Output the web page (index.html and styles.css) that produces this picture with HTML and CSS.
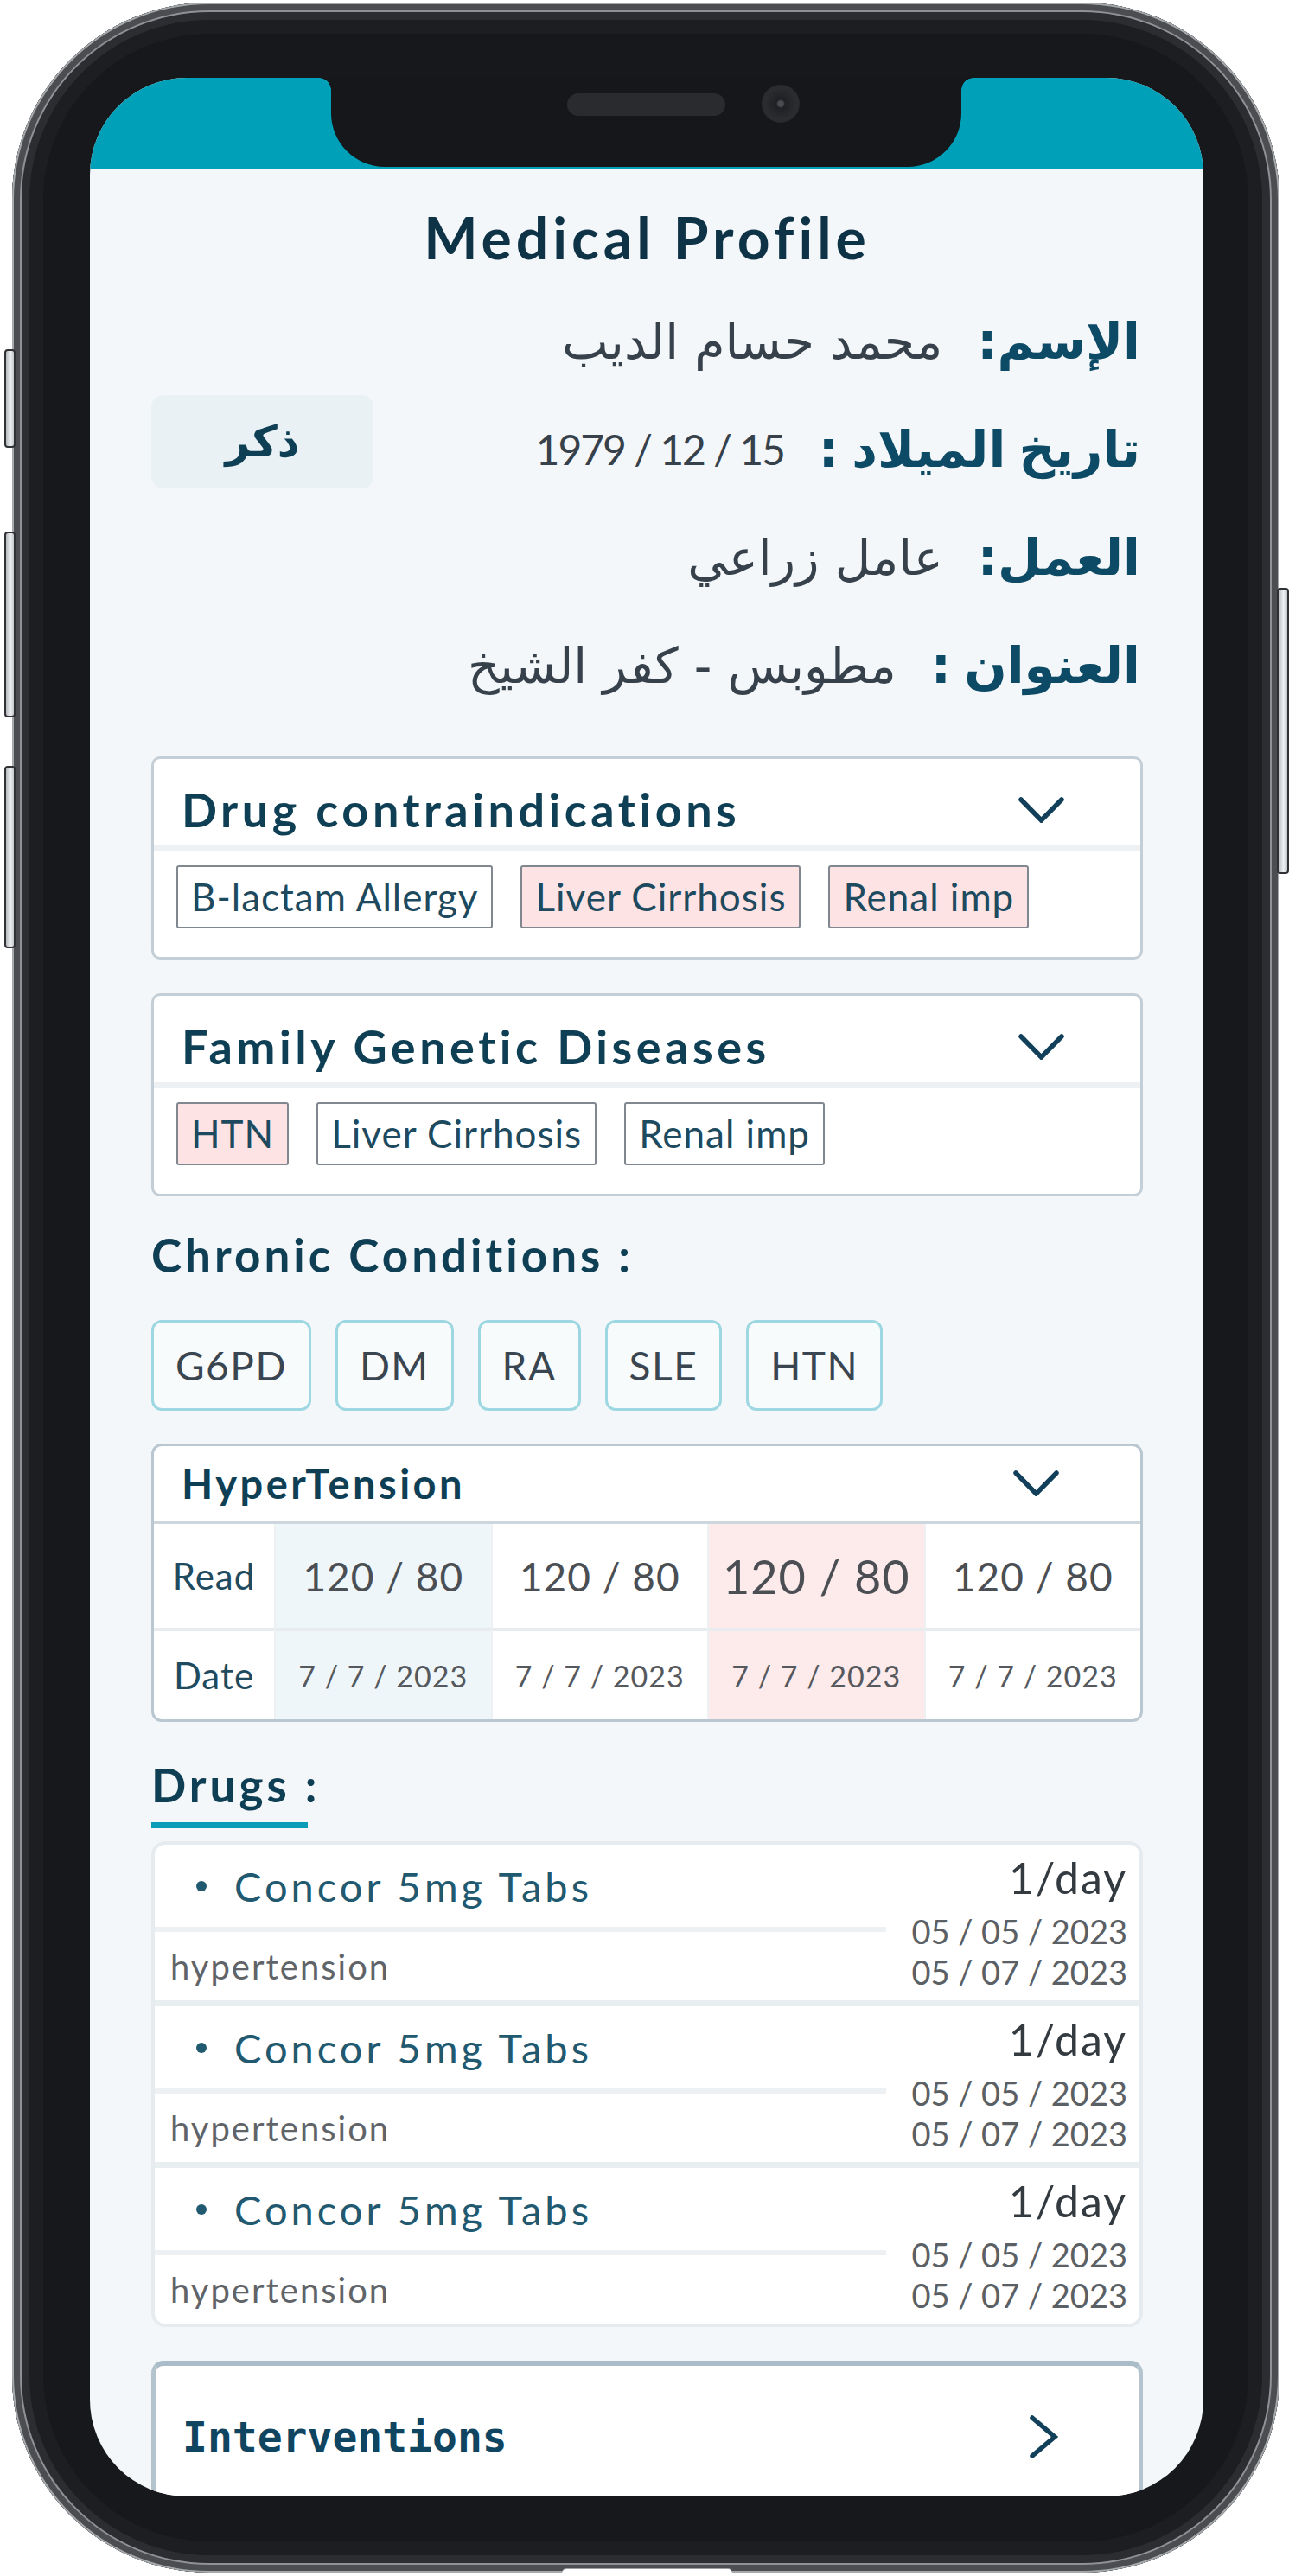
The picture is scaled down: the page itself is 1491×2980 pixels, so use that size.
FILE: index.html
```html
<!DOCTYPE html>
<html lang="en">
<head>
<meta charset="utf-8">
<title>Medical Profile</title>
<link rel="stylesheet" href="styles.css">
</head>
<body>
<div class="phone">
  <span class="btn btn-mute"></span>
  <span class="btn btn-volup"></span>
  <span class="btn btn-voldown"></span>
  <span class="btn btn-power"></span>
  <span class="port"></span>
  <div class="screen">
    <div class="topbar"></div>
    <div class="notch"><span class="speaker"></span><span class="camera"></span></div>
    <main class="content">
      <h1 class="title">Medical Profile</h1>

      <section class="info" dir="rtl">
        <div class="info-row"><span class="label">الإسم:</span><span class="value">محمد حسام الديب</span></div>
        <div class="info-row"><span class="label">تاريخ الميلاد :</span><span class="value num" dir="ltr">1979 / 12 / 15</span><span class="gender">ذكر</span></div>
        <div class="info-row"><span class="label">العمل:</span><span class="value">عامل زراعي</span></div>
        <div class="info-row"><span class="label">العنوان :</span><span class="value">مطوبس - كفر الشيخ</span></div>
      </section>

      <section class="card">
        <div class="card-head">
          <h2 class="card-title">Drug contraindications</h2>
          <svg class="chev-down" width="53" height="30" viewBox="0 0 53 30"><polyline points="3,3 26.5,27 50,3"/></svg>
        </div>
        <div class="tags">
          <span class="tag">B-lactam Allergy</span>
          <span class="tag tag-alert">Liver Cirrhosis</span>
          <span class="tag tag-alert">Renal imp</span>
        </div>
      </section>

      <section class="card card-second">
        <div class="card-head">
          <h2 class="card-title">Family Genetic Diseases</h2>
          <svg class="chev-down" width="53" height="30" viewBox="0 0 53 30"><polyline points="3,3 26.5,27 50,3"/></svg>
        </div>
        <div class="tags">
          <span class="tag tag-alert">HTN</span>
          <span class="tag">Liver Cirrhosis</span>
          <span class="tag">Renal imp</span>
        </div>
      </section>

      <h2 class="section-title">Chronic Conditions :</h2>
      <div class="chronic">
        <span class="chip">G6PD</span>
        <span class="chip">DM</span>
        <span class="chip">RA</span>
        <span class="chip">SLE</span>
        <span class="chip">HTN</span>
      </div>

      <section class="vitals">
        <div class="vitals-head">
          <h3 class="vitals-title">HyperTension</h3>
          <svg class="chev-down" width="53" height="30" viewBox="0 0 53 30"><polyline points="3,3 26.5,27 50,3"/></svg>
        </div>
        <div class="vitals-grid">
          <div class="cell rowhead">Read</div>
          <div class="cell read col-blue">120 / 80</div>
          <div class="cell read">120 / 80</div>
          <div class="cell read read-big col-pink">120 / 80</div>
          <div class="cell read">120 / 80</div>
          <div class="cell rowhead row2">Date</div>
          <div class="cell date row2 col-blue">7 / 7 / 2023</div>
          <div class="cell date row2">7 / 7 / 2023</div>
          <div class="cell date row2 col-pink">7 / 7 / 2023</div>
          <div class="cell date row2">7 / 7 / 2023</div>
        </div>
      </section>

      <h2 class="section-title drugs-title">Drugs :</h2>
      <div class="underline"></div>

      <section class="drug-list">
        <div class="drug">
          <div class="drug-name"><span class="dot"></span>Concor 5mg Tabs</div>
          <div class="drug-line"></div>
          <div class="drug-reason">hypertension</div>
          <div class="drug-meta"><div class="freq">1/day</div><div class="dates">05 / 05 / 2023<br>05 / 07 / 2023</div></div>
        </div>
        <div class="drug">
          <div class="drug-name"><span class="dot"></span>Concor 5mg Tabs</div>
          <div class="drug-line"></div>
          <div class="drug-reason">hypertension</div>
          <div class="drug-meta"><div class="freq">1/day</div><div class="dates">05 / 05 / 2023<br>05 / 07 / 2023</div></div>
        </div>
        <div class="drug">
          <div class="drug-name"><span class="dot"></span>Concor 5mg Tabs</div>
          <div class="drug-line"></div>
          <div class="drug-reason">hypertension</div>
          <div class="drug-meta"><div class="freq">1/day</div><div class="dates">05 / 05 / 2023<br>05 / 07 / 2023</div></div>
        </div>
      </section>

      <section class="interventions">
        <div class="interventions-row">
          <span class="interventions-title">Interventions</span>
          <svg class="chev-right" width="39" height="52" viewBox="0 0 39 52"><polyline points="6,4 32,26 6,48"/></svg>
        </div>
      </section>
    </main>
  </div>
</div>
</body>
</html>
```

FILE: styles.css
```css
html, body {
  margin: 0;
  padding: 0;
  background: #ffffff;
}
body {
  width: 1491px;
  height: 2980px;
  overflow: hidden;
  font-family: Lato, "Open Sans", sans-serif;
}

/* ---------- device frame ---------- */
.phone {
  position: relative;
  box-sizing: border-box;
  width: 1466px;
  height: 2973px;
  margin: 3px 0 0 14px;
  padding: 87px 88px 88px 90px;
  border-radius: 228px;
  background: #17181b;
  box-shadow:
    inset 0 0 0 2px #a7aaad,
    inset 0 0 0 9px #4b4d51,
    inset 0 0 0 11px #8e9195,
    inset 0 0 0 20px #2c2d31,
    inset 0 0 0 36px #1d1e21;
}
.btn {
  position: absolute;
  box-sizing: border-box;
  width: 13px;
  border: 2px solid #2f3134;
  border-radius: 4px;
  background: linear-gradient(90deg, #b4b8bc, #eef0f2 55%, #c3c6c9);
}
.btn-mute { left: -9px; top: 401px; height: 114px; }
.btn-volup { left: -9px; top: 612px; height: 215px; }
.btn-voldown { left: -9px; top: 883px; height: 211px; }
.btn-power { right: -11px; top: 677px; height: 331px; width: 14px; }
.port {
  position: absolute;
  left: 636px;
  bottom: -1px;
  width: 197px;
  height: 5px;
  border-radius: 6px 6px 0 0;
  background: #ffffff;
  box-shadow: 0 -1px 0 #9a9da1;
}

.screen {
  position: relative;
  width: 1288px;
  height: 2798px;
  border-radius: 112px;
  overflow: hidden;
  background: #f4f7f9;
}
.topbar {
  height: 105px;
  background: #00a0b8;
}
.notch {
  position: absolute;
  left: 279px;
  top: 0;
  width: 729px;
  height: 103px;
  background: #16171a;
  border-radius: 0 0 62px 62px;
}
.notch::before,
.notch::after {
  content: "";
  position: absolute;
  top: 0;
  width: 14px;
  height: 14px;
}
.notch::before {
  left: -14px;
  background: radial-gradient(circle at 0 100%, transparent 13.5px, #16171a 14px);
}
.notch::after {
  right: -14px;
  background: radial-gradient(circle at 100% 100%, transparent 13.5px, #16171a 14px);
}
.speaker {
  position: absolute;
  left: 273px;
  top: 18px;
  width: 183px;
  height: 26px;
  border-radius: 13px;
  background: #2a2b2f;
}
.camera {
  position: absolute;
  left: 498px;
  top: 8px;
  width: 44px;
  height: 44px;
  border-radius: 50%;
  background: radial-gradient(circle, #4a4c52 0 3px, #1f2023 5px, #2b2d31 60%, #1c1d20 100%);
}

/* ---------- content ---------- */
.content {
  padding: 0 70px 0 71px;
}
.title {
  margin: 42px 0 0;
  font-size: 66px;
  line-height: 76px;
  font-weight: 700;
  text-align: center;
  color: #0f3346;
  letter-spacing: 5px;
}

.info {
  margin-top: 19px;
  padding-right: 3px;
  font-family: "DejaVu Sans", sans-serif;
}
.info-row {
  display: flex;
  align-items: center;
  gap: 40px;
  height: 125px;
}
.label {
  font-size: 58px;
  font-weight: 700;
  color: #0d4a66;
  word-spacing: -5px;
}
.value {
  font-size: 57px;
  color: #36414b;
}
.num {
  font-family: Lato, sans-serif;
  font-size: 48px;
  letter-spacing: -2px;
}
.gender {
  margin-right: auto;
  align-self: flex-start;
  width: 257px;
  height: 108px;
  display: flex;
  align-items: center;
  justify-content: center;
  background: #e9f1f5;
  border-radius: 14px;
  font-size: 50px;
  font-weight: 700;
  color: #0f3f55;
}

/* ---------- tag cards ---------- */
.card {
  margin-top: 43px;
  background: #ffffff;
  border: 3px solid #c3ced6;
  border-radius: 10px;
}
.card-second {
  margin-top: 39px;
}
.card-head {
  box-sizing: border-box;
  height: 107px;
  padding: 18px 88px 0 32px;
  display: flex;
  align-items: center;
  justify-content: space-between;
  border-bottom: 7px solid #edf1f4;
}
.card-title {
  margin: 0;
  font-size: 54px;
  line-height: 1;
  font-weight: 700;
  color: #0f3f55;
  letter-spacing: 4.5px;
}
.chev-down polyline,
.chev-right polyline {
  fill: none;
  stroke: #12405a;
  stroke-width: 5.5;
  stroke-linecap: round;
  stroke-linejoin: miter;
}
.tags {
  display: flex;
  gap: 32px;
  padding: 16px 26px 33px;
}
.tag {
  box-sizing: border-box;
  height: 73px;
  padding: 0 15px;
  border: 2px solid #80878e;
  border-radius: 3px;
  font-size: 44px;
  line-height: 69px;
  color: #1d4a5e;
  letter-spacing: 1px;
}
.tag-alert {
  background: #fde3e4;
}

/* ---------- chronic ---------- */
.section-title {
  margin: 37px 0 0;
  font-size: 53px;
  line-height: 62px;
  font-weight: 700;
  color: #0f3f55;
  letter-spacing: 4px;
}
.chronic {
  display: flex;
  gap: 28px;
  margin-top: 44px;
}
.chip {
  box-sizing: border-box;
  height: 105px;
  padding: 0 25px;
  border: 3px solid #9dd7e1;
  border-radius: 12px;
  background: #f8fbfc;
  font-size: 46px;
  line-height: 99px;
  color: #394550;
  letter-spacing: 1.5px;
}

/* ---------- vitals ---------- */
.vitals {
  margin-top: 38px;
  background: #ffffff;
  border: 3px solid #b9c7d0;
  border-radius: 12px;
  overflow: hidden;
}
.vitals-head {
  box-sizing: border-box;
  height: 90px;
  padding: 0 94px 0 32px;
  display: flex;
  align-items: center;
  justify-content: space-between;
  border-bottom: 4px solid #cdd6dc;
}
.vitals-title {
  margin: 0;
  font-size: 47px;
  font-weight: 700;
  color: #0f3f55;
  letter-spacing: 3.5px;
}
.vitals-grid {
  display: grid;
  grid-template-columns: 139px repeat(4, 1fr);
  grid-template-rows: 120px 106px;
}
.cell {
  display: flex;
  align-items: center;
  justify-content: center;
  box-sizing: border-box;
  border-left: 2px solid #eef1f3;
}
.rowhead {
  border-left: 0;
  font-size: 42px;
  color: #1f4b60;
  letter-spacing: 1px;
}
.row2 {
  border-top: 4px solid #e8ecef;
}
.read {
  font-size: 46px;
  color: #4b4f54;
  letter-spacing: 1px;
}
.read-big {
  font-size: 54px;
}
.date {
  font-size: 34px;
  color: #55595e;
  letter-spacing: 1px;
}
.col-blue { background: #eef6f9; }
.col-pink { background: #fdeaeb; }

/* ---------- drugs ---------- */
.drugs-title {
  margin-top: 42px;
}
.underline {
  width: 181px;
  height: 7px;
  margin-top: 12px;
  background: #0b9cb8;
}
.drug-list {
  margin-top: 15px;
  background: #ffffff;
  border: 4px solid #e6ebef;
  border-radius: 16px;
}
.drug {
  display: grid;
  grid-template-columns: 1fr 293px;
  grid-template-rows: 95px 6px 79px;
}
.drug + .drug {
  border-top: 7px solid #e9eef1;
}
.drug-name {
  grid-column: 1;
  grid-row: 1;
  display: flex;
  align-items: center;
  padding-left: 48px;
  font-size: 47px;
  color: #215a70;
  letter-spacing: 4px;
}
.dot {
  width: 12px;
  height: 12px;
  margin-right: 32px;
  border-radius: 50%;
  background: #215a70;
}
.drug-line {
  grid-column: 1;
  grid-row: 2;
  background: #eef1f4;
}
.drug-reason {
  grid-column: 1;
  grid-row: 3;
  display: flex;
  align-items: center;
  padding-left: 18px;
  font-size: 40px;
  color: #606468;
  letter-spacing: 2px;
}
.drug-meta {
  grid-column: 2;
  grid-row: 1 / 4;
  text-align: right;
  padding: 9px 14px 0 0;
}
.freq {
  font-size: 50px;
  line-height: 58px;
  color: #333a40;
  letter-spacing: 2px;
}
.dates {
  margin-top: 10px;
  font-size: 38px;
  line-height: 47px;
  color: #5b6065;
  letter-spacing: 0;
}

/* ---------- interventions ---------- */
.interventions {
  margin-top: 39px;
  height: 300px;
  background: #ffffff;
  border: 5px solid #b4c4ce;
  border-top: 6px solid #a9bcc8;
  border-radius: 14px;
}
.interventions-row {
  height: 164px;
  display: flex;
  align-items: center;
  justify-content: space-between;
  padding: 0 90px 0 31px;
}
.interventions-title {
  font-family: "DejaVu Sans Mono", monospace;
  font-size: 48px;
  font-weight: 700;
  color: #0f4560;
}
```
